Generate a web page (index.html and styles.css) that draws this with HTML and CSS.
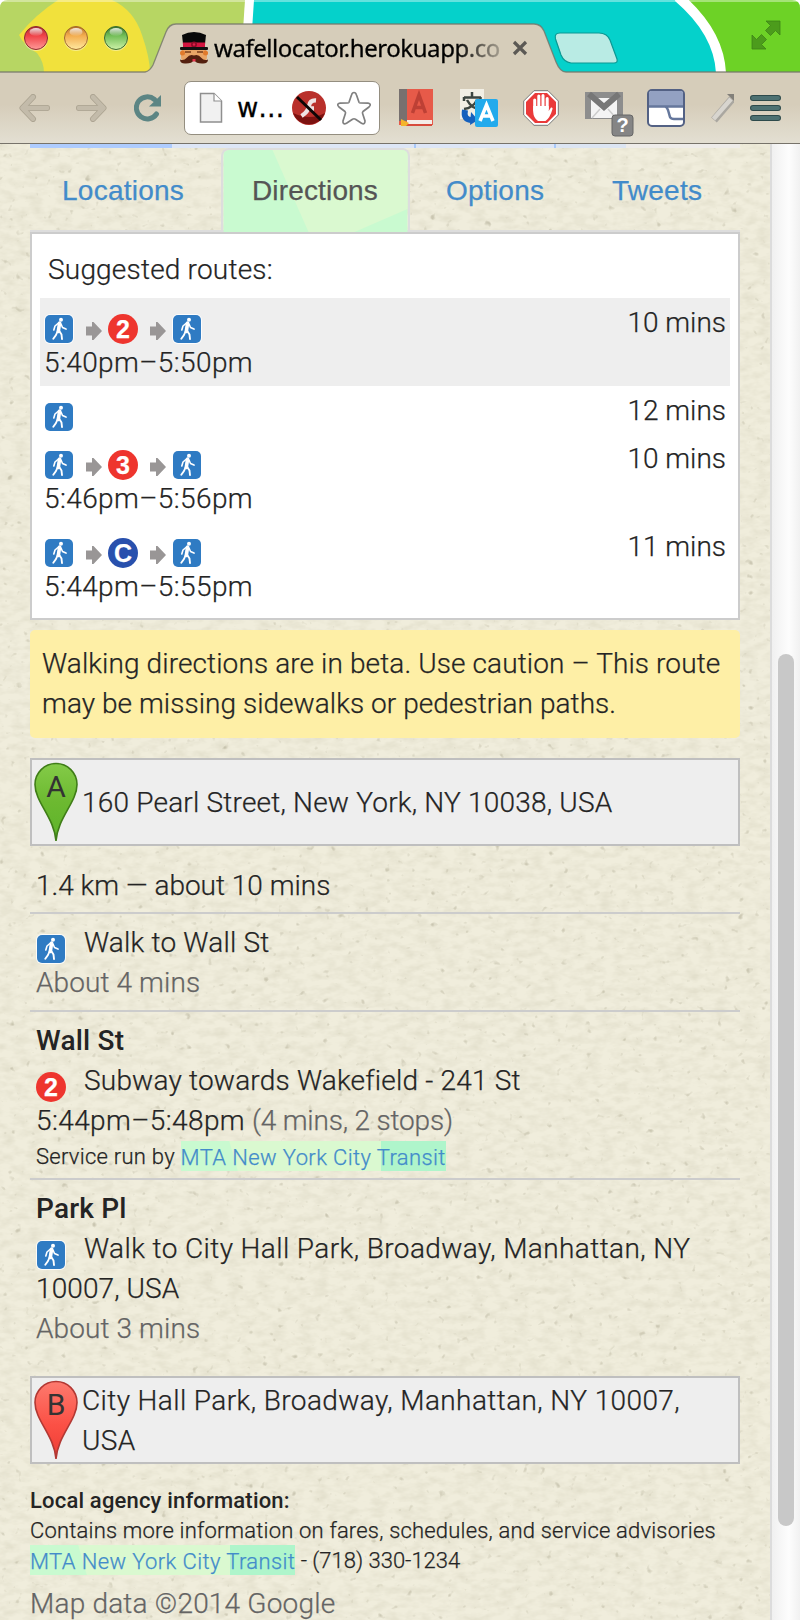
FILE: index.html
```html
<!DOCTYPE html>
<html lang="en">
<head>
<meta charset="utf-8">
<title>wafellocator.herokuapp.com</title>
<link rel="stylesheet" href="styles.css">
</head>
<body>
<svg class="defs" width="0" height="0">
  <defs>
    <linearGradient id="gRed" x1="0" y1="0" x2="0" y2="1"><stop offset="0" stop-color="#a82f36"/><stop offset=".4" stop-color="#f04248"/><stop offset="1" stop-color="#ff9a98"/></linearGradient>
    <linearGradient id="gAmb" x1="0" y1="0" x2="0" y2="1"><stop offset="0" stop-color="#b5702c"/><stop offset=".4" stop-color="#f3ad4f"/><stop offset="1" stop-color="#ffe9a0"/></linearGradient>
    <linearGradient id="gGrn" x1="0" y1="0" x2="0" y2="1"><stop offset="0" stop-color="#39752f"/><stop offset=".4" stop-color="#72be57"/><stop offset="1" stop-color="#cdf2a8"/></linearGradient>
    <linearGradient id="shine" x1="0" y1="0" x2="0" y2="1"><stop offset="0" stop-color="#fff" stop-opacity=".85"/><stop offset="1" stop-color="#fff" stop-opacity=".05"/></linearGradient>
    <linearGradient id="pinA" x1="0" y1="0" x2="0" y2="1"><stop offset="0" stop-color="#84cb48"/><stop offset=".5" stop-color="#6cb930"/><stop offset="1" stop-color="#5db32a"/></linearGradient>
    <linearGradient id="pinB" x1="0" y1="0" x2="0" y2="1"><stop offset="0" stop-color="#fd7a6e"/><stop offset=".55" stop-color="#fb5146"/><stop offset="1" stop-color="#ee3c33"/></linearGradient>
    <symbol id="walk" viewBox="0 0 30 30">
      <rect width="30" height="30" rx="6" fill="#fff" opacity=".85"/>
      <rect x="1" y="1" width="28" height="28" rx="5" fill="#2f7bc3"/>
      <circle cx="17" cy="5.800" r="2" fill="#fff"/>
      <path d="M15.600 9 14.300 17.500" stroke="#fff" stroke-width="3.600" fill="none" stroke-linecap="round"/>
      <path d="M14.500 9 11 12l-1.200 4M17 10l1.500 3.500 3.500 1.600" stroke="#fff" stroke-width="1.600" fill="none" stroke-linecap="round" stroke-linejoin="round"/>
      <path d="M13.500 17.500 12 21 9.300 24.800M15.300 17l2.200 3.500.5 4.500" stroke="#fff" stroke-width="1.900" fill="none" stroke-linecap="round" stroke-linejoin="round"/>
    </symbol>
    <symbol id="arrow" viewBox="0 0 16 18"><path d="M0 4.500h6V0h1.500L16 9 7.500 18H6v-4.500H0z" fill="#999696"/></symbol>
  </defs>
</svg>

<header class="browser">
  <div class="titlebar">
    <svg class="theme" width="800" height="73" viewBox="0 0 800 73">
      <rect width="800" height="73" fill="#b7d663"/>
      <path d="M19 35Q36 14 58 0H112Q134 10 142 35Q150 58 150 73H44Q44 62 37 53Q24 46 19 35Z" fill="#f1e13c"/>
      <path d="M245 0h10v30h-12Z" fill="#fff"/>
      <path d="M254 0H680Q720 35 722 73H300V30H252Z" fill="#05d1cb"/>
      <path d="M680 0Q719 34 721 73H800V0Z" fill="#6dd226"/>
      <path d="M678 -3Q719 32 721 73" fill="none" stroke="#fff" stroke-width="10"/>
      <path d="M0 1H800" stroke="#fff" stroke-opacity=".5" stroke-width="1.500"/>
      <path d="M-2 75V72H145Q150 71 153 65L166 32Q169 24 176 24H534Q541 24 544 31L556 62Q560 72 566 72H802V75Z" fill="#d6cdba" stroke="#737469" stroke-opacity=".8" stroke-width="1.300"/>
      <path d="M0 0H8Q0 0 0 8Z M800 0V8Q800 0 792 0Z" fill="#fff"/>
      <path d="M560 33H599Q607 33 610 40L617 59Q618 63 614 63H571Q564 62 561 55L555.500 39Q554 33 560 33Z" fill="#b9ebe4" stroke="#0b9893" stroke-width="1.200"/>
    </svg>
    <div class="lights">
      <svg width="26" height="28" viewBox="0 0 26 28"><circle cx="13" cy="14" r="12" fill="#fff" opacity=".4"/><circle cx="13" cy="13" r="11.500" fill="url(#gRed)" stroke="#8c2a2e"/><ellipse cx="13" cy="7" rx="6.500" ry="4" fill="url(#shine)"/></svg>
      <svg width="26" height="28" viewBox="0 0 26 28"><circle cx="13" cy="14" r="12" fill="#fff" opacity=".4"/><circle cx="13" cy="13" r="11.500" fill="url(#gAmb)" stroke="#a0682a"/><ellipse cx="13" cy="7" rx="6.500" ry="4" fill="url(#shine)"/></svg>
      <svg width="26" height="28" viewBox="0 0 26 28"><circle cx="13" cy="14" r="12" fill="#fff" opacity=".4"/><circle cx="13" cy="13" r="11.500" fill="url(#gGrn)" stroke="#3c6b2c"/><ellipse cx="13" cy="7" rx="6.500" ry="4" fill="url(#shine)"/></svg>
    </div>
    <div class="tab-label">
      <svg width="28" height="32" viewBox="0 0 28 32">
        <rect x="1" y="17" width="26" height="12" rx="4" fill="#e9a566"/>
        <circle cx="2.500" cy="21" r="2.500" fill="#e07a2c"/><circle cx="25.500" cy="21" r="2.500" fill="#e07a2c"/>
        <path d="M2 3Q8 0 14 0T26 3L24.500 16H3.500Z" fill="#080808"/>
        <path d="M2.800 10.500H25.200L24.800 15.500H3.200Z" fill="#d3143f"/>
        <circle cx="14" cy="12.500" r="3" fill="#8d0c28"/><circle cx="14" cy="12.500" r="1.200" fill="#e0204a"/>
        <rect y="15" width="28" height="3" rx="1" fill="#111"/>
        <path d="M5 20h6M17 20h6" stroke="#7a3d18" stroke-width="1.500"/>
        <path d="M14 23.500Q10 21.500 6.500 26 4 29 0 27.500 0 32 6 31.500 12 31.500 14 28 16 31.500 22 31.500 28 32 28 27.500 24 29 21.500 26 18 21.500 14 23.500Z" fill="#54200f"/>
        <rect x="12.500" y="27" width="3" height="2.500" fill="#e6334c"/>
      </svg>
      <span class="tab-title">wafellocator.herokuapp.co</span>
      <svg class="close" width="16" height="16" viewBox="0 0 16 16"><path d="M2 2 14 14M14 2 2 14" stroke="#5c5955" stroke-width="3.200"/></svg>
    </div>
    <svg class="fullscreen" width="30" height="30" viewBox="0 0 30 30"><path d="M15 1H29V15L24.500 10.500 19.500 15.500 14.500 10.500 19.500 5.500ZM1 15 5.500 19.500 10.500 14.500 15.500 19.500 10.500 24.500 15 29H1Z" fill="#4c9c1c" stroke="#3e8316" stroke-width=".8"/></svg>
  </div>

  <div class="toolbar">
    <svg class="back" width="32" height="28" viewBox="0 0 32 28"><path d="M14 3 3.500 14 14 25M4 14H28" fill="none" stroke="#aba391" stroke-width="6" stroke-linecap="round" stroke-linejoin="round"/><path d="M14 3 3.500 14 14 25M4 14H28" fill="none" stroke="#c3bbaa" stroke-width="4.400" stroke-linecap="round" stroke-linejoin="round"/></svg>
    <svg class="forward" width="32" height="28" viewBox="0 0 32 28"><path d="M18 3 28.500 14 18 25M28 14H4" fill="none" stroke="#aba391" stroke-width="6" stroke-linecap="round" stroke-linejoin="round"/><path d="M18 3 28.500 14 18 25M28 14H4" fill="none" stroke="#c3bbaa" stroke-width="4.400" stroke-linecap="round" stroke-linejoin="round"/></svg>
    <svg class="reload" width="28" height="28" viewBox="0 0 28 28"><path d="M22.500 20A11 11 0 1 1 20.500 5.500" fill="none" stroke="#5c8584" stroke-width="5" stroke-linecap="round"/><path d="M27 1V12.500H15Z" fill="#5c8584"/></svg>
    <div class="omnibox">
      <svg width="24" height="32" viewBox="0 0 24 32"><path d="M1.500 1.500H15L22.500 9V30H1.500Z" fill="#f1f1f1" stroke="#8f8f8f" stroke-width="1.500"/><path d="M15 1.500V9H22.500" fill="#fff" stroke="#8f8f8f" stroke-width="1.200"/></svg>
      <span class="url">w…</span>
      <svg width="34" height="34" viewBox="0 0 34 34"><circle cx="17" cy="17" r="17" fill="#b9302b"/><path d="M1 22A17 17 0 0 0 33 22Q18 30 1 22Z" fill="#7c1210"/><path d="M24 9.500Q18 9 17 15T9.500 25M15 17.500H22" stroke="#efe3e3" stroke-width="4.300" fill="none"/><path d="M5 6 29 29" stroke="#0c0606" stroke-width="3"/></svg>
      <svg class="star" width="36" height="36" viewBox="0 0 36 36"><path d="M18 2.500Q19.800 2.500 20.500 5L23 12.200Q23.300 13 24.500 13L32 13.200Q36 14 33 17L27 21.500Q26.200 22.300 26.600 23.500L29 31Q29 35 25.500 33.300L19.500 29.200Q18 28.300 16.500 29.200L10.500 33.300Q6.500 35 7 31L9.400 23.500Q9.800 22.300 9 21.500L3 17Q0 14 4 13.200L11.500 13Q12.700 13 13 12.200L15.500 5Q16.200 2.500 18 2.500Z" fill="#fff" stroke="#808080" stroke-width="1.700"/></svg>
    </div>
    <div class="extensions">
      <svg width="34" height="38" viewBox="0 0 34 38"><rect width="34" height="36" fill="#e75a49"/><rect width="8" height="32" fill="#77706f"/><rect x="8" y="31" width="25" height="4" fill="#f4ece7"/><rect x="2" y="35" width="31" height="2" fill="#d74b3c"/><path d="M13.500 24 20 6 26.500 24M16 18.500H24" fill="none" stroke="#bd4035" stroke-width="3.500"/><path d="M2 30 10 34 7 37H2Z" fill="#f3b52d"/></svg>
      <svg width="38" height="38" viewBox="0 0 38 38"><rect width="24" height="30" fill="#f2efe5"/><path d="M12 3V8M4 8.500H21M4 8V12M20.500 8V12M7 11Q12 20 20 20M17 11Q13 19 4 20" stroke="#3c4540" stroke-width="2.500" fill="none"/><path d="M5 21Q3 31 12 31" fill="none" stroke="#1560bd" stroke-width="6"/><path d="M11 23 18 31 10 36Z" fill="#1560bd"/><rect x="15" y="10" width="23" height="28" rx="2" fill="#22aaec"/><path d="M20 32 26.500 16 33 32M22 27H31" fill="none" stroke="#fff" stroke-width="3.500"/></svg>
      <svg width="36" height="36" viewBox="0 0 36 36"><path d="M11 .7H25L35.300 11V25L25 35.300H11L.7 25V11Z" fill="#fff" stroke="#777"/><path d="M12 3H24L33 12V24L24 33H12L3 24V12Z" fill="#ea3a3a"/><path d="M11.700 20V10M15.800 18V6M20 18V5.500M24.200 19V8.500" stroke="#fff" stroke-width="3" stroke-linecap="round"/><path d="M10.200 16H25.700V21L28 17.500Q30 17 29.500 19 27 28 22.500 31H15Q10.500 28 10.200 22Z" fill="#fff"/></svg>
      <svg class="mail" width="50" height="46" viewBox="0 0 50 46"><rect x="1" y="1" width="38" height="27" fill="#8d8d8d"/><rect x="7" y="7" width="26" height="20" fill="#f4f4f4"/><path d="M5 3 20 16 35 3" stroke="#777" stroke-width="6" fill="none"/><path d="M8 27 16 18M32 27 24 18" stroke="#ccc" stroke-width="1.500"/><rect x="28" y="24" width="21" height="21" rx="3" fill="#858585" stroke="#666"/><text x="38.500" y="41" text-anchor="middle" class="badge-text">?</text></svg>
      <svg width="38" height="38" viewBox="0 0 38 38"><rect x="1" y="1" width="36" height="36" rx="4" fill="#fff" stroke="#536184" stroke-width="2"/><path d="M2 17V4Q2 2 4 2H34Q36 2 36 4V17Z" fill="#93a1c2"/><path d="M2 17.500H18Q20 18 21 21L23 28Q24 30 27 30H36M18 17.500H36" fill="none" stroke="#65779c" stroke-width="2.500"/></svg>
      <svg class="pen" width="24" height="32" viewBox="0 0 24 32"><path d="M4 28 22 7" stroke="#aaa7a0" stroke-width="7.500"/><path d="M3.500 27 21 7" stroke="#d8d5cf" stroke-width="4.500"/><path d="M17 2H24V9Z" fill="#83807a"/></svg>
    </div>
    <svg class="menu" width="31" height="28" viewBox="0 0 31 28"><path d="M3 4H28M3 14H28M3 24H28" stroke="#2d4a4b" stroke-width="6" stroke-linecap="round"/><path d="M3 4H28M3 14H28M3 24H28" stroke="#4d7172" stroke-width="4" stroke-linecap="round"/></svg>
  </div>
</header>

<div class="viewport">
  <main class="page">
    <svg class="paper" width="770" height="1476">
      <filter id="grain" x="0" y="0" width="100%" height="100%" color-interpolation-filters="sRGB">
        <feTurbulence type="fractalNoise" baseFrequency=".07 .14" numOctaves="3" seed="4"/>
        <feColorMatrix values="0 0 0 0 .62  0 0 0 0 .6  0 0 0 0 .48  .3 0 0 0 -.11"/>
      </filter>
      <filter id="flecks" x="0" y="0" width="100%" height="100%" color-interpolation-filters="sRGB">
        <feTurbulence type="fractalNoise" baseFrequency=".13" numOctaves="2" seed="11"/>
        <feColorMatrix values="0 0 0 0 .6  0 0 0 0 .58  0 0 0 0 .48  5 0 0 0 -3.500"/>
      </filter>
      <rect width="770" height="1476" fill="#f0eddc"/>
      <rect width="770" height="1476" filter="url(#grain)"/>
      <rect width="770" height="1476" filter="url(#flecks)" opacity=".4"/>
    </svg>
    <div class="content">
      <div class="map-strip"><span class="map-water"></span><span class="map-land"></span><span class="map-line"></span><span class="map-block"></span><span class="map-line"></span><span class="map-park"></span><span class="map-edge"></span></div>
      <nav class="tabs">
        <a class="tab tab-locations">Locations</a>
        <a class="tab tab-active">
          <svg class="tab-bg" width="184" height="82" viewBox="0 0 184 82"><rect width="184" height="82" fill="#c9fad0"/><path d="M49 0H184V59L131 82H85Z" fill="#daf9d0"/></svg>
          <span>Directions</span>
        </a>
        <a class="tab tab-options">Options</a>
        <a class="tab">Tweets</a>
      </nav>

      <section class="routes">
        <h2 class="routes-title track-2">Suggested routes:</h2>
        <div class="route route-selected">
          <div class="route-main">
            <div class="route-icons"><svg class="ic"><use href="#walk"/></svg><svg class="arr"><use href="#arrow"/></svg><span class="line red">2</span><svg class="arr"><use href="#arrow"/></svg><svg class="ic"><use href="#walk"/></svg></div>
            <div class="track-4">5:40pm–5:50pm</div>
          </div>
          <div>10 mins</div>
        </div>
        <div class="route">
          <div class="route-main"><div class="route-icons"><svg class="ic"><use href="#walk"/></svg></div></div>
          <div>12 mins</div>
        </div>
        <div class="route">
          <div class="route-main">
            <div class="route-icons"><svg class="ic"><use href="#walk"/></svg><svg class="arr"><use href="#arrow"/></svg><span class="line red">3</span><svg class="arr"><use href="#arrow"/></svg><svg class="ic"><use href="#walk"/></svg></div>
            <div class="track-4">5:46pm–5:56pm</div>
          </div>
          <div>10 mins</div>
        </div>
        <div class="route">
          <div class="route-main">
            <div class="route-icons"><svg class="ic"><use href="#walk"/></svg><svg class="arr"><use href="#arrow"/></svg><span class="line blue">C</span><svg class="arr"><use href="#arrow"/></svg><svg class="ic"><use href="#walk"/></svg></div>
            <div class="track-4">5:44pm–5:55pm</div>
          </div>
          <div>11 mins</div>
        </div>
      </section>

      <p class="warning">Walking directions are in beta. Use caution – This route <span class="warning-end">may be missing sidewalks or pedestrian paths.</span></p>

      <div class="place track-2">
        <svg width="44" height="80" viewBox="0 0 44 80"><path d="M22 79C20.500 56 1 40 1 22.500A21 21 0 0 1 43 22.500C43 40 23.500 56 22 79Z" fill="url(#pinA)" stroke="#3f7d17" stroke-width="1.600"/><text x="22" y="34.500" text-anchor="middle" class="pin-text">A</text></svg>
        <span>160 Pearl Street, New York, NY 10038, USA</span>
      </div>

      <p class="summary">1.4 km — about 10 mins</p>
      <div class="step">
        <div class="track-2"><svg class="step-ic"><use href="#walk"/></svg>Walk to Wall St</div>
        <div class="muted track-1">About 4 mins</div>
      </div>
      <div class="step">
        <div class="stop">Wall St</div>
        <div class="track-2"><span class="step-ic line red">2</span>Subway towards Wakefield - 241 St</div>
        <div><span class="track-4">5:44pm–5:48pm</span> <span class="muted duration">(4 mins, 2 stops)</span></div>
        <div class="small service">Service run by <a class="agency">MTA New York City Transit</a></div>
      </div>
      <div class="step">
        <div class="stop">Park Pl</div>
        <div class="track-4"><svg class="step-ic"><use href="#walk"/></svg>Walk to City Hall Park, Broadway, Manhattan, NY <span class="zip">10007, USA</span></div>
        <div class="muted track-1">About 3 mins</div>
      </div>

      <div class="place place-end track-4">
        <svg width="44" height="80" viewBox="0 0 44 80"><path d="M22 79C20.500 56 1 40 1 22.500A21 21 0 0 1 43 22.500C43 40 23.500 56 22 79Z" fill="url(#pinB)" stroke="#b23833" stroke-width="1.600"/><text x="22" y="34.500" text-anchor="middle" class="pin-text">B</text></svg>
        <span>City Hall Park, Broadway, Manhattan, NY 10007, USA</span>
      </div>

      <div class="small info">
        <div class="small-bold">Local agency information:</div>
        <div class="info-note">Contains more information on fares, schedules, and service advisories</div>
        <div><a class="agency">MTA New York City Transit</a> - (718) 330-1234</div>
      </div>
      <p class="copyright muted track-2">Map data ©2014 Google</p>
    </div>
  </main>
  <div class="scrollbar"><div class="thumb"></div></div>
</div>
</body>
</html>
```
FILE: styles.css
```css
* { box-sizing: border-box; }
body { margin: 0; width: 800px; height: 1620px; overflow: hidden; background: #fff; font-family: Roboto, "Liberation Sans", sans-serif; }
p, h2 { margin: 0; font: inherit; }
svg { display: block; flex: none; }
.defs { position: absolute; }

.browser { height: 144px; border-bottom: 1px solid #77736a; }
.titlebar { position: relative; height: 73px; display: flex; align-items: flex-start; }
.theme { position: absolute; left: 0; top: 0; }
.lights { position: relative; display: flex; gap: 14px; padding: 25px 0 0 23px; }
.tab-label { position: relative; display: flex; align-items: center; width: 380px; margin-left: 51px; padding-top: 32px; }
.tab-title { width: 288px; margin-left: 6px; white-space: nowrap; font: 24px/32px "Noto Sans", "Open Sans", sans-serif; letter-spacing: -.45px; -webkit-text-stroke: .3px #000; color: #000; -webkit-mask-image: linear-gradient(90deg, #000 84%, rgba(0, 0, 0, .2)); mask-image: linear-gradient(90deg, #000 84%, rgba(0, 0, 0, .2)); }
.close { margin-left: 10px; }
.fullscreen { position: relative; margin: 20px 19px 0 auto; }

.toolbar { height: 70px; display: flex; align-items: center; padding: 0 19px 0 19px; background: linear-gradient(#d6cdba 0, #d6cdba 45%, #e3dfd2); }
.forward { margin-left: 24px; }
.reload { margin-left: 27px; }
.omnibox { display: flex; align-items: center; width: 196px; height: 54px; margin-left: 22px; padding: 0 8px 0 14px; background: #fff; border: 1.500px solid #948e80; border-radius: 7px; }
.url { width: 48px; margin-left: 14px; font: 26px/34px "DejaVu Sans", sans-serif; -webkit-text-stroke: .3px #000; white-space: nowrap; color: #000; }
.omnibox .url + svg { margin-left: 8px; }
.star { margin-left: 10px; }
.extensions { display: flex; align-items: center; margin-left: 19px; }
.extensions svg + svg { margin-left: 27px; }
.extensions svg:nth-child(3) { margin-left: 25px; }
.extensions .mail { margin: 12px 0 0 25px; }
.extensions svg:nth-child(5) { margin-left: 13px; }
.extensions .pen { margin-left: 25px; }
.badge-text { font: bold 20px "Liberation Sans", sans-serif; fill: #fff; }
.menu { margin-left: auto; }

.viewport { display: flex; height: 1476px; }
.page { position: relative; width: 772px; height: 1476px; overflow: hidden; border-right: 2px solid #dcdcdc; }
.paper { position: absolute; left: 0; top: 0; }
.content { position: relative; width: 740px; padding-left: 30px; font-size: 28px; font-weight: 300; line-height: 40px; color: #242424; -webkit-text-stroke-width: .25px; }
.scrollbar { width: 28px; padding: 510px 6px 0 6px; background: linear-gradient(90deg, #f0f0f0, #fdfdfd 60%, #f1f1f1); }
.thumb { width: 16px; height: 872px; border-radius: 8px; background: #c8c8c8; }

.track-1 { letter-spacing: .1px; }
.track-2 { letter-spacing: .2px; }
.track-4 { letter-spacing: .4px; }

.map-strip { display: flex; height: 4px; }
.map-water { width: 142px; background: #aeccfe; }
.map-land { width: 242px; background: #dde6f6; }
.map-line { width: 2px; background: #a9c9f8; }
.map-block { width: 138px; background: #dde6f6; }
.map-park { width: 70px; background: #dce5f2; }
.map-edge { flex: 1; background: #eeece9; }

.tabs { display: flex; height: 84px; border-bottom: 2px solid #ddd; font: 28px/40px "Liberation Sans", Arial, sans-serif; letter-spacing: .25px; color: #428bca; }
.tab { height: 84px; padding: 23px 0 0 32px; }
.tab-locations { width: 191px; }
.tab-active { position: relative; width: 189px; height: 84px; margin: 0 4px 0 0; padding: 21px 0 0 29px; border: 2px solid #ddd; border-bottom: 0; border-radius: 8px 8px 0 0; color: #555; overflow: hidden; }
.tab-active span { position: relative; letter-spacing: .15px; }
.tab-options { width: 166px; }
.tab-bg { position: absolute; left: 0; top: 0; width: 185px; }

.routes { height: 388px; padding: 8px; border: 2px solid #ccc; background: #fff; }
.routes-title { padding: 8px; }
.route { display: flex; justify-content: space-between; padding: 5px 4px 3px; }
.route-selected { background: #eee; }
.route-icons { display: flex; height: 40px; padding-top: 11px; letter-spacing: 0; }
.ic { width: 30px; height: 30px; }
.arr { width: 16px; height: 18px; margin: 8px 6px 0 12px; }
.line { display: block; width: 30px; height: 30px; border-radius: 50%; text-align: center; font: bold 25px/31px "Liberation Sans", sans-serif; letter-spacing: 0; color: #fff; }
.red { background: #ee352e; }
.blue { background: #2850ad; }

.warning { height: 108px; margin-top: 10px; padding: 14px 12px; background: #feefa6; border-radius: 5px; letter-spacing: .11px; }
.warning-end { letter-spacing: .05px; }
.place { display: flex; align-items: center; height: 88px; margin-top: 20px; padding: 0 10px 0 2px; border: 2px solid #bfbfbf; background: #eee; }
.place span { margin-left: 4px; padding-top: 1px; }
.pin-text { font: 30px Roboto, sans-serif; letter-spacing: 0; fill: #333; }
.summary { height: 46px; margin-top: 20px; padding-left: 6px; }
.step { padding: 9px 6px 7px; border-top: 2px solid #ccc; }
.step-ic { display: inline-block; width: 30px; height: 30px; margin: 11px 18px -1px 0; vertical-align: top; }
.stop { font-weight: 500; letter-spacing: .2px; -webkit-text-stroke-width: 0; }
.zip { letter-spacing: .1px; }
.muted { color: #646464; }
.duration { letter-spacing: -.18px; }
.small { font-size: 22px; line-height: 30px; }
.service { height: 30px; padding-top: 1px; margin-top: -1px; letter-spacing: .27px; line-height: 32px; }
.small-bold { font-weight: 500; letter-spacing: .18px; -webkit-text-stroke-width: 0; }
.info-note { letter-spacing: .19px; }
.agency { display: inline-block; height: 30px; margin-top: -1px; line-height: 33px; letter-spacing: .39px; vertical-align: top; color: #428bca; background: linear-gradient(74deg, #c9fad0 27%, #daf9d0 27.500%) no-repeat 0 0 / 200px 30px, linear-gradient(#aff5cb, #aff5cb); }
.service .agency { margin-top: 0; }
.service + .step { margin-top: 0; }
.step:has(.service) { height: 168px; }
.place-end { margin-top: 20px; }
.info { margin-top: 20px; padding-top: 2px; }
.copyright { margin-top: 8px; }
```
